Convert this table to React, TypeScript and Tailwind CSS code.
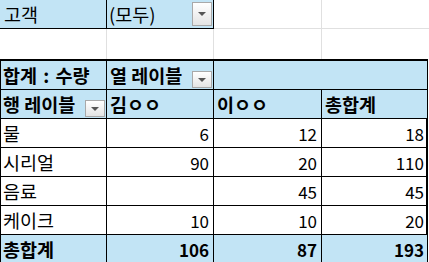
import React from "react";

const blue = "bg-[#c2e4f5]";

const DropButton = ({ tall }: { tall?: boolean }) => (
  <div
    className={`flex items-center justify-center w-[20px] ${
      tall ? "h-[24px]" : "h-[17px]"
    } border border-[#a9a9a9] bg-gradient-to-b from-white to-[#e4e4e4]`}
  >
    <div className="w-0 h-0 border-l-[4px] border-r-[4px] border-t-[4px] border-l-transparent border-r-transparent border-t-[#555]" />
  </div>
);

const rows = [
  { label: "물", kim: "6", lee: "12", total: "18" },
  { label: "시리얼", kim: "90", lee: "20", total: "110" },
  { label: "음료", kim: "", lee: "45", total: "45" },
  { label: "케이크", kim: "10", lee: "10", total: "20" },
];

// hangul text in the sheet renders wider than the digits
const Ko = ({ children }: { children: React.ReactNode }) => (
  <span className="text-[18.5px] leading-none">{children}</span>
);

export default function App() {
  return (
    <div
      className="w-[429px] h-[262px] bg-white text-black text-[17px] leading-none overflow-hidden"
      style={{ fontFamily: '"Noto Sans CJK KR", "Noto Sans", sans-serif' }}
    >
      {/* Report filter area */}
      <div className="grid grid-cols-[107px_107px_108px_107px]">
        <div className={`${blue} h-[29px] flex items-center pl-[4px] border-r border-b border-black`}>
          <Ko>고객</Ko>
        </div>
        <div className={`${blue} h-[29px] flex items-center justify-between pl-[2px] pr-[1px] border-r border-b border-black`}>
          <Ko>(모두)</Ko>
          <DropButton tall />
        </div>
        <div className="h-[29px] border-r border-b border-[#e0e0e0]" />
        <div className="h-[29px] border-b border-[#e0e0e0]" />
        <div className="h-[30px] border-r border-[#e0e0e0]" />
        <div className="h-[30px] border-r border-[#e0e0e0]" />
        <div className="h-[30px] border-r border-[#e0e0e0]" />
        <div className="h-[30px]" />
      </div>

      {/* Pivot table */}
      <div className="w-[428px] grid grid-cols-[106px_107px_108px_105px] border-t-2 border-l border-r-2 border-b-2 border-black">
        <div className={`${blue} h-[29px] flex items-center pl-[2px] font-bold border-r border-b border-black`}>
          <span className="[word-spacing:2px]"><Ko>합계 : 수량</Ko></span>
        </div>
        <div className={`${blue} h-[29px] flex items-end justify-between pl-[3px] pr-[1px] pb-[1px] font-bold border-r border-b border-black`}>
          <span className="mb-[4px]"><Ko>열 레이블</Ko></span>
          <DropButton />
        </div>
        <div className={`${blue} col-span-2 h-[29px] border-b border-black`} />

        <div className={`${blue} h-[29px] flex items-end justify-between pl-[2px] pr-[1px] pb-[1px] font-bold border-r border-b border-black`}>
          <span className="mb-[4px]"><Ko>행 레이블</Ko></span>
          <DropButton />
        </div>
        <div className={`${blue} h-[29px] flex items-center pl-[3px] font-bold border-r border-b border-black`}>
          <Ko>김ㅇㅇ</Ko>
        </div>
        <div className={`${blue} h-[29px] flex items-center pl-[3px] font-bold border-r border-b border-black`}>
          <Ko>이ㅇㅇ</Ko>
        </div>
        <div className={`${blue} h-[29px] flex items-center pl-[3px] font-bold border-b border-black`}>
          <Ko>총합계</Ko>
        </div>

        {rows.map((r) => (
          <React.Fragment key={r.label}>
            <div className="h-[29px] flex items-center pl-[2px] border-r border-b border-black">
              <Ko>{r.label}</Ko>
            </div>
            <div className="h-[29px] flex items-center justify-end pr-[4px] border-r border-b border-black">
              {r.kim}
            </div>
            <div className="h-[29px] flex items-center justify-end pr-[4px] border-r border-b border-black">
              {r.lee}
            </div>
            <div className="h-[29px] flex items-center justify-end pr-[3px] border-b border-black">
              {r.total}
            </div>
          </React.Fragment>
        ))}

        <div className={`${blue} h-[28px] flex items-center pl-[2px] font-bold border-r border-black`}>
          <Ko>총합계</Ko>
        </div>
        <div className={`${blue} h-[28px] flex items-center justify-end pr-[4px] font-bold border-r border-black`}>
          106
        </div>
        <div className={`${blue} h-[28px] flex items-center justify-end pr-[4px] font-bold border-r border-black`}>
          87
        </div>
        <div className={`${blue} h-[28px] flex items-center justify-end pr-[3px] font-bold`}>
          193
        </div>
      </div>
    </div>
  );
}
